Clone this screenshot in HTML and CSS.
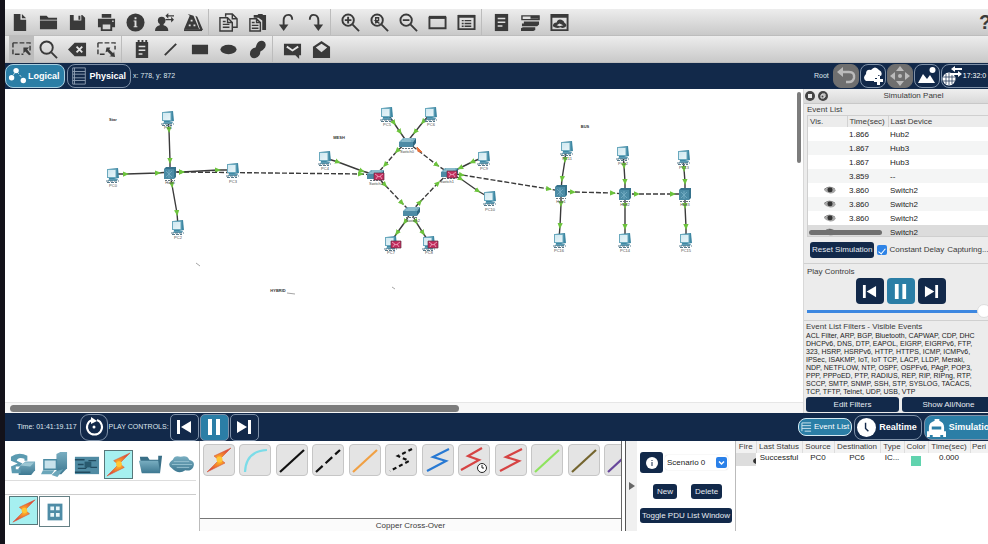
FILE: index.html
```html
<!DOCTYPE html>
<html lang="en">
<head>
<meta charset="utf-8">
<title>Network Simulator</title>
<link rel="stylesheet" href="styles.css">
</head>
<body>
<svg class="defs" aria-hidden="true">
  <defs>
    <linearGradient id="screen" x1="0" y1="0" x2="1" y2="1"><stop offset="0" stop-color="#cfe8f1"/><stop offset="1" stop-color="#e9f5f8"/></linearGradient>
    <linearGradient id="teal" x1="0" y1="0" x2="0" y2="1"><stop offset="0" stop-color="#79aec1"/><stop offset="1" stop-color="#3d7891"/></linearGradient>
    <radialGradient id="fire"><stop offset="0" stop-color="#ffc928"/><stop offset="0.45" stop-color="#f58a2a"/><stop offset="1" stop-color="#dd4b3a"/></radialGradient>
    <marker id="tip" viewBox="0 0 5 5" refX="2.5" refY="2.5" markerWidth="6" markerHeight="6" markerUnits="userSpaceOnUse" orient="auto"><path d="M0 .3 5 2.5 0 4.7z" fill="#6cc33c"/></marker>
    <symbol id="pc" viewBox="-8 -8 16 16" overflow="visible">
      <path d="M-5-6 5-7 6 3-4 5z" fill="#3f88a3"/><path d="M-6-6H3.500V3H-6z" fill="#6aa9be"/><path d="M-5-5H2.500V2H-5z" fill="url(#screen)"/>
      <path d="M-4 4H5L4 6H-5z" fill="#5b9bb3"/><path d="M-7 6H6M-6 7.500H4" stroke="#56798a" stroke-width="1" stroke-dasharray="3 1"/>
    </symbol>
    <symbol id="hub" viewBox="-8 -8 16 16" overflow="visible">
      <path d="M-6-4-4-6H6V4L4 6H-6z" fill="#36728c"/><path d="M-6-4H4V6H-6z" fill="#4b8ba5"/><path d="M-4-2 2 4M2-2-4 4M-1-3V5" stroke="#78b0c5" stroke-width=".8"/><path d="M-5 7.500H5" stroke="#65747c" stroke-dasharray="2 1"/>
    </symbol>
    <symbol id="switch" viewBox="-8 -8 16 16" overflow="visible">
      <path d="M-8-1-4-5H9L6-1z" fill="#74adc1"/><path d="M-8-1H6V4H-8z" fill="#4d8ba5"/><path d="M6-1 9-5V0L6 4z" fill="#2e6881"/><path d="M-5-2H4M-3-4H6" stroke="#b7d7e1" stroke-width=".7"/><path d="M-5 5.500H6" stroke="#65747c" stroke-dasharray="2 1"/>
    </symbol>
    <symbol id="packet" viewBox="-5 -4 10 8" overflow="visible">
      <path d="M-5-3H5V4H-5z" fill="#c22c5d" stroke="#623246" stroke-width=".7"/><path d="M-4-2 0 1 4-2M-3 3-1 0M3 3 1 0" fill="none" stroke="#f1afc5" stroke-width=".8"/>
    </symbol>
    <symbol id="bolt" viewBox="0 0 28 28"><path d="M26 2 9 10l5 4L2 26l18-9-5-4z" fill="url(#fire)" stroke="#d6583d" stroke-width=".6"/><circle cx="14.500" cy="13.500" r="3" fill="#ffc736"/></symbol>
    <symbol id="back" viewBox="0 0 16 16"><path d="M1 1h3v14H1zM15 2v12L5 8z" fill="#fff"/></symbol>
    <symbol id="pause" viewBox="0 0 16 16"><path d="M2 0h4v16H2zM10 0h4v16h-4z" fill="#fff"/></symbol>
    <symbol id="forward" viewBox="0 0 16 16"><path d="M12 1h3v14h-3zM1 2v12l10-6z" fill="#fff"/></symbol>
    <symbol id="eye" viewBox="0 0 12 8"><path d="M0 4Q5-1 12 4 10 8 6 7.500 2 7 0 4z" fill="#a6a6a6"/><circle cx="6" cy="3.800" r="2.500" fill="#333"/><path d="M0 3.500Q5-1 11 3" fill="none" stroke="#666" stroke-width=".8"/></symbol>
  </defs>
</svg>
<div class="app">
  <div class="toolbar" role="toolbar" aria-label="File and view">
    <button aria-label="New"><svg viewBox="0 0 20 20"><path d="M4 1h7v6h6v12H4zM12.500 1 17 5.500h-4.500z"/></svg></button>
    <button aria-label="Open"><svg viewBox="0 0 20 20"><path d="M1 3h7l2 2h9v2H1zM1 8h18v9H1z"/></svg></button>
    <button aria-label="Save"><svg viewBox="0 0 20 20"><path fill-rule="evenodd" d="M2 2h13l3 3v13H2zM6 2v6h8V2zM11 3h2v4h-2z"/></svg></button>
    <button aria-label="Print"><svg viewBox="0 0 20 20"><path fill-rule="evenodd" d="M5 1h10v4H5zM1 6h18v9h-3v4H4v-4H1zM6 12v5h8v-5zM16 8v1.500h1.500V8z"/></svg></button>
    <button aria-label="Network information"><svg viewBox="0 0 20 20"><circle cx="10" cy="10" r="9.500"/><path class="light" d="M9 4.500h2v2H9zM8 8h3v6h1v1H8v-1h1V9H8z"/></svg></button>
    <button aria-label="User profile"><svg viewBox="0 0 20 20"><circle cx="7" cy="8" r="4"/><path d="M0 19q0-5 5-6v-3h4v3q5 1 5 6z"/><path class="thin" d="M13 3h7M11 7h7"/><path d="M14 0v6l-3-3zM17 4v6l3-3z"/></svg></button>
    <button aria-label="Activity wizard"><svg viewBox="0 0 20 20"><path d="M0 17 6 3 4 1l6 2 6 14zM12 3l2 1 6 14h-3z"/><path class="light" d="M7 7h2v2H7zM5 12h2v2H5zM10 12h2v2h-2z"/><path d="M0 17h19v2H0z"/></svg></button>
    <i class="sep"></i>
    <button aria-label="Copy"><svg viewBox="0 0 20 20"><path class="thin" d="M7 4V1h7l5 5v9h-5M14 1v5h5M1 5h8l5 5v9H1zM9 5v5h5M4 9h3M4 12h7M4 15h7"/></svg></button>
    <button aria-label="Paste"><svg viewBox="0 0 20 20"><path d="M6 2h4l1-1h4l1 1h3v16h-4V8l-4-3H6z"/><path class="thin" d="M2 6h7l4 4v9H2zM9 6v4h4M4 10h3M4 13h7M4 16h7"/></svg></button>
    <button aria-label="Undo"><svg viewBox="0 0 20 20"><path class="line" d="M7 14V8q0-6 5-6 4 0 4 5"/><path d="M2 12h10l-5 7z"/></svg></button>
    <button aria-label="Redo"><svg viewBox="0 0 20 20"><path class="line" d="M13 14V8q0-6-5-6-4 0-4 5"/><path d="M8 12h10l-5 7z"/></svg></button>
    <i class="sep"></i>
    <button aria-label="Zoom in"><svg viewBox="0 0 20 20"><circle class="line" cx="7.500" cy="7.500" r="6"/><path class="line" d="m12 12 7 7M4 7.500h7M7.500 4v7"/></svg></button>
    <button aria-label="Reset zoom"><svg viewBox="0 0 20 20"><circle class="line" cx="7.500" cy="7.500" r="6"/><path class="line" d="m12 12 7 7"/><path class="thin" d="M6 11V5h3v3H6l4 3"/></svg></button>
    <button aria-label="Zoom out"><svg viewBox="0 0 20 20"><circle class="line" cx="7.500" cy="7.500" r="6"/><path class="line" d="m12 12 7 7M4 7.500h7"/></svg></button>
    <button aria-label="Drawing palette"><svg viewBox="0 0 20 20"><path class="line" d="M1.500 5h17v11h-17z"/><path d="M1 3h18v3H1z"/></svg></button>
    <button aria-label="Custom devices"><svg viewBox="0 0 20 20"><path class="line" d="M1.500 3h17v14h-17z"/><path class="thin" d="M5 8h2M8 8h7M5 11h2M8 11h7M5 14h2M8 14h7"/><path d="M1 2h18v3H1z"/></svg></button>
    <i class="sep"></i>
    <button aria-label="Notes"><svg viewBox="0 0 20 20"><path d="M3 1h14v18H3z"/><path class="light" d="M6 5h8v1.500H6zM6 9h8v1.500H6zM6 13h5v1.500H6z"/></svg></button>
    <button aria-label="Command log"><svg viewBox="0 0 20 20"><path class="thin" d="M1 3h18v4H1z"/><path d="M10 3h9v3h-9zM3 9h16v3l-2 2H1v-3h2zM2 15h13v3l-2 1H0v-3z"/></svg></button>
    <button aria-label="Background"><svg viewBox="0 0 20 20"><path class="line" d="M1.500 2h17v16h-17z"/><path d="M1 1h18v4H1zM3 14q0-4 4-4 1-4 5-3 3 1 3 3 3 2 2 4-3 3-6 1-4 2-8-1z"/><path class="light" d="m7 13 3-2 4 2-4 1z"/></svg></button>
    <button class="help" aria-label="Help">?</button>
  </div>
  <div class="toolbar" role="toolbar" aria-label="Edit and draw">
    <button class="pressed" aria-label="Select"><svg viewBox="0 0 20 20"><path class="thin" stroke-dasharray="5 2" d="M1 3h18v9M1 3v12h11"/><path d="M12 8h6l-2 2 4 5-2 1-4-4-2 2z"/></svg></button>
    <button aria-label="Inspect"><svg viewBox="0 0 20 20"><circle class="line" cx="8" cy="8" r="6.500"/><path class="line" d="m13 13 6 6"/></svg></button>
    <button aria-label="Delete item"><svg viewBox="0 0 20 20"><path d="M7 3h12v14H7l-7-7z"/><path class="cut" d="m9 7 6 6M15 7l-6 6"/></svg></button>
    <button aria-label="Resize shape"><svg viewBox="0 0 20 20"><path class="thin" stroke-dasharray="5 2" d="M1 3h18v7M1 3v12h9"/><path d="M10 8h4l-1 2 4 4 1-2 1 6-6-1 2-1-4-4-2 1z"/></svg></button>
    <i class="sep"></i>
    <button aria-label="Place note"><svg viewBox="0 0 20 20"><path d="M4 2h13v17H4zM6 0h2v3H6zM10 0h2v3h-2zM14 0h2v3h-2z"/><path class="light" d="M7 6h7v1.500H7zM7 10h7v1.500H7zM7 14h4v1.500H7z"/></svg></button>
    <button aria-label="Draw line"><svg viewBox="0 0 20 20"><path class="line" d="M4 16 16 4"/></svg></button>
    <button aria-label="Draw rectangle"><svg viewBox="0 0 20 20"><path d="M2 5h17v10H2z"/></svg></button>
    <button aria-label="Draw ellipse"><svg viewBox="0 0 20 20"><ellipse cx="10" cy="10" rx="8.500" ry="5"/></svg></button>
    <button aria-label="Draw freeform"><svg viewBox="0 0 20 20"><path d="M9 5q2-5 7-4 4 2 2 7-2 3-5 4 0 5-5 7-5 1-6-4 0-6 6-7z"/></svg></button>
    <i class="sep"></i>
    <button aria-label="Add simple PDU"><svg viewBox="0 0 20 20"><path d="M1 4h18v12h-2v4l-4-4H1z"/><path class="cut" d="m4 7 6 4 6-4"/></svg></button>
    <button aria-label="Add complex PDU"><svg viewBox="0 0 20 20"><path fill-rule="evenodd" d="M1 7 10 1l9 6v12H1zM4 8l6 5 6-5-6-4z"/></svg></button>
  </div>

  <nav class="bar workspace">
    <button class="mode active"><svg viewBox="0 0 20 20"><path d="m4 12 5-8 9 11" stroke="#fff" stroke-dasharray="2 2" fill="none"/><circle cx="9" cy="4" r="3"/><circle cx="4" cy="12" r="3"/><circle cx="17" cy="15" r="3"/></svg>Logical</button>
    <button class="mode"><svg viewBox="0 0 20 20"><path class="rack" d="M3 1h14v18H3zM3 5h14M3 8h14M3 12h14M3 15h14M5 1v18"/></svg>Physical</button>
    <span class="tiny">x: 778, y: 872</span>
    <div class="nav-right">
      <span class="tiny">Root</span>
      <button class="square off" aria-label="Back"><svg viewBox="0 0 20 20"><path d="M1 6 7 1v10z"/><path d="M6 6h7q6 0 5 6-1 4-5 4h-3" fill="none" stroke="#bbb" stroke-width="2.500"/></svg></button>
      <button class="square" aria-label="New cluster"><svg viewBox="0 0 20 20"><path d="M3 15q-4-3 0-7 0-5 5-4 4-5 8 0 4 2 2 6l-3-1v3h-3v3z"/><path d="M14 10h3v3h3v3h-3v3h-3v-3h-3v-3h3z"/></svg></button>
      <button class="square off" aria-label="Move object"><svg viewBox="0 0 20 20"><path d="m10 0 4 5H6zM10 20l4-5H6zM0 10l5-4v8zM20 10l-5-4v8z"/><circle cx="10" cy="10" r="2"/></svg></button>
      <button class="square" aria-label="Set background"><svg viewBox="0 0 20 20"><path d="m1 17 5-9 4 5 3-4 5 8z"/><circle cx="15.500" cy="4" r="3"/></svg></button>
      <button class="square clock"><svg viewBox="0 0 20 20"><circle cx="7" cy="13" r="6.500"/><path d="M1 11h12M1 15h12M7 7v12M4 8v10M10 8v10" stroke="#12294a" stroke-width=".7"/><path d="M9 3l4-3v2h7v2h-7v2zM20 8l-4-3v2h-7v2h7v2z"/></svg>17:32:0</button>
    </div>
  </nav>

  <main class="main">
    <section class="canvas" aria-label="Workspace">
      <svg class="network">
        <g transform="translate(-5 -89)">
          <g class="links">
            <path d="M168 118 169 130 170 161 170 172M113 174 126 174 158 173 170 172M170 172 182 172 218 170 232 170M170 172 172 185 177 213 178 226M325 158 338 162 362 171 376 175M387 113 394 123 400 132 407 142M431 113 423 122 415 132 407 142M484 157 472 162 460 168 449 173M449 173 461 179 478 191 490 198M411 212 405 222 397 233 391 242M411 212 416 222 423 233 429 242M566 147 565 160 562 179 561 191M561 191 561 204 560 226 559 239M623 153 624 166 625 182 625 194M625 194 625 206 625 227 625 239M683 155 684 169 685 182 685 194M685 194 685 206 686 227 686 239"/>
            <path class="cross" d="M170 172 182 172 361 174 376 175M407 142 397 151 385 165 376 175M376 175 385 185 402 203 411 212M411 212 420 202 438 183 449 173M449 173 462 175 549 189 561 191M561 191 573 192 613 193 625 194M625 194 637 194 673 194 685 194"/>
            <path class="cross" d="M407 142 437 165 449 173"/>
          </g>
          <path d="m417 147 5 5-4-.5z" fill="#e8713c" stroke="#e8713c"/>
          <g>
            <use href="#pc" x="160" y="110" width="16" height="16"/><use href="#pc" x="105" y="167" width="16" height="16"/><use href="#pc" x="225" y="162" width="16" height="16"/><use href="#pc" x="170" y="219" width="16" height="16"/>
            <use href="#pc" x="379" y="106" width="16" height="16"/><use href="#pc" x="423" y="106" width="16" height="16"/><use href="#pc" x="317" y="150" width="16" height="16"/><use href="#pc" x="476" y="150" width="16" height="16"/><use href="#pc" x="482" y="190" width="16" height="16"/><use href="#pc" x="383" y="235" width="16" height="16"/><use href="#pc" x="421" y="235" width="16" height="16"/>
            <use href="#pc" x="559" y="140" width="16" height="16"/><use href="#pc" x="615" y="145" width="16" height="16"/><use href="#pc" x="676" y="149" width="16" height="16"/><use href="#pc" x="552" y="232" width="16" height="16"/><use href="#pc" x="617" y="232" width="16" height="16"/><use href="#pc" x="678" y="232" width="16" height="16"/>
            <use href="#hub" x="162" y="165" width="16" height="16"/><use href="#hub" x="553" y="183" width="16" height="16"/><use href="#hub" x="617" y="186" width="16" height="16"/><use href="#hub" x="677" y="186" width="16" height="16"/>
            <use href="#switch" x="399" y="135" width="16" height="16"/><use href="#switch" x="367" y="167" width="16" height="16"/><use href="#switch" x="441" y="165" width="16" height="16"/><use href="#switch" x="403" y="204" width="16" height="16"/>
            <use href="#packet" x="374" y="172" width="10" height="8"/><use href="#packet" x="447" y="170" width="10" height="8"/><use href="#packet" x="391" y="240" width="10" height="8"/><use href="#packet" x="428" y="240" width="10" height="8"/>
          </g>
          <g class="labels">
            <text x="168" y="129">PC1</text><text x="113" y="187">PC0</text><text x="233" y="183">PC3</text><text x="178" y="239">PC2</text><text x="170" y="184">Hub0</text>
            <text x="387" y="126">PC5</text><text x="431" y="126">PC6</text><text x="325" y="170">PC4</text><text x="484" y="170">PC9</text><text x="490" y="211">PC10</text><text x="391" y="254">PC7</text><text x="429" y="254">PC8</text>
            <text x="407" y="153">Switch0</text><text x="376" y="185">Switch3</text><text x="447" y="183">Switch1</text><text x="413" y="222">Switch2</text>
            <text x="567" y="160">PC11</text><text x="623" y="165">PC12</text><text x="684" y="169">PC13</text><text x="559" y="252">PC16</text><text x="625" y="252">PC14</text><text x="686" y="252">PC15</text>
            <text x="561" y="203">Hub1</text><text x="625" y="206">Hub2</text><text x="685" y="206">Hub3</text>
            <text class="note" x="113" y="121">Star</text><text class="note" x="339" y="139">MESH</text><text class="note" x="585" y="128">BUS</text><text class="note" x="278" y="292">HYBRID</text>
          </g>
          <path d="m287 293 8 1M196 263l4 3M392 287l3 2" stroke="#a5a5a5" fill="none"/>
        </g>
      </svg>
      <span class="vthumb"></span>
      <div class="htrack"><span class="hthumb"></span></div>
    </section>

    <aside class="panel">
      <div class="panel-inner">
        <header class="titlebar">
          <button aria-label="Close"><svg viewBox="0 0 10 10"><circle cx="5" cy="5" r="5" fill="#444"/><path d="M3 3h4v4H3z" fill="#e9e9e9"/></svg></button>
          <button aria-label="Detach"><svg viewBox="0 0 10 10"><circle cx="5" cy="5" r="5" fill="#444"/><path d="M3 4h3v3H3zM4 4V3h3v3H6" fill="none" stroke="#e9e9e9"/></svg></button>
          <h2>Simulation Panel</h2>
        </header>
        <section class="events">
          <h3>Event List</h3>
          <div class="event-scroll">
            <table>
              <thead><tr><th class="col-vis">Vis.</th><th class="col-time">Time(sec)</th><th>Last Device</th></tr></thead>
              <tbody>
                <tr><td></td><td>1.866</td><td>Hub2</td></tr>
                <tr><td></td><td>1.867</td><td>Hub3</td></tr>
                <tr><td></td><td>1.867</td><td>Hub3</td></tr>
                <tr><td></td><td>3.859</td><td>--</td></tr>
                <tr><td><svg class="eye"><use href="#eye"/></svg></td><td>3.860</td><td>Switch2</td></tr>
                <tr><td><svg class="eye"><use href="#eye"/></svg></td><td>3.860</td><td>Switch2</td></tr>
                <tr><td><svg class="eye"><use href="#eye"/></svg></td><td>3.860</td><td>Switch2</td></tr>
                <tr class="current"><td><svg class="eye"><use href="#eye"/></svg></td><td>3.860</td><td>Switch2</td></tr>
              </tbody>
            </table>
            <span class="ethumb"></span>
          </div>
          <div class="reset-row">
            <button class="navy">Reset Simulation</button>
            <label><input type="checkbox" checked>Constant Delay</label>
            <span>Capturing...</span>
          </div>
        </section>
        <section class="play">
          <h3>Play Controls</h3>
          <div class="play-buttons">
            <button aria-label="Step back"><svg><use href="#back"/></svg></button>
            <button class="active" aria-label="Pause"><svg><use href="#pause"/></svg></button>
            <button aria-label="Step forward"><svg><use href="#forward"/></svg></button>
          </div>
          <input type="range" min="0" max="100" value="100" aria-label="Play speed">
        </section>
        <section class="filters">
          <h3>Event List Filters - Visible Events</h3>
          <p>ACL Filter, ARP, BGP, Bluetooth, CAPWAP, CDP, DHC<br>DHCPv6, DNS, DTP, EAPOL, EIGRP, EIGRPv6, FTP,<br>323, HSRP, HSRPv6, HTTP, HTTPS, ICMP, ICMPv6,<br>IPSec, ISAKMP, IoT, IoT TCP, LACP, LLDP, Meraki,<br>NDP, NETFLOW, NTP, OSPF, OSPFv6, PAgP, POP3,<br>PPP, PPPoED, PTP, RADIUS, REP, RIP, RIPng, RTP,<br>SCCP, SMTP, SNMP, SSH, STP, SYSLOG, TACACS,<br>TCP, TFTP, Telnet, UDP, USB, VTP</p>
          <div class="filter-buttons"><button class="navy">Edit Filters</button><button class="navy">Show All/None</button></div>
        </section>
      </div>
    </aside>
  </main>

  <div class="bar timebar">
    <span class="tiny">Time: 01:41:19.117</span>
    <button class="ctl round" aria-label="Power cycle devices"><svg viewBox="0 0 20 20"><path d="M8 3a7.500 7.500 0 1 0 5 0" fill="none" stroke="#fff" stroke-width="2"/><path d="m7 0 6 4-6 3z"/><circle cx="10" cy="10" r="1.500"/></svg></button>
    <span class="tiny">PLAY CONTROLS:</span>
    <button class="ctl" aria-label="Back"><svg><use href="#back"/></svg></button>
    <button class="ctl active" aria-label="Pause"><svg><use href="#pause"/></svg></button>
    <button class="ctl" aria-label="Forward"><svg><use href="#forward"/></svg></button>
    <div class="views">
      <button class="view list"><svg viewBox="0 0 12 12"><path d="M1 1h10M1 4h10M1 7h10M4 10h7M1 1v9" fill="none" stroke="#d5e9f2"/></svg>Event List</button>
      <button class="view"><svg viewBox="0 0 20 20"><circle cx="10" cy="10" r="10"/><path d="M9 5v6l3 3" fill="none" stroke="#12294a" stroke-width="1.500"/></svg>Realtime</button>
      <button class="view active"><svg viewBox="0 0 20 20"><path fill-rule="evenodd" d="M8 1h5v2q5 2 5 7v4h2v6h-3v-2h-3v2H6v-2H3v2H0v-6h2v-4q0-5 6-7zM5 9v3h10V9z"/></svg>Simulatio</button>
    </div>
  </div>

  <div class="bottom">
    <section class="devices" aria-label="Device types">
      <div class="types">
        <button aria-label="Network devices"><svg viewBox="0 0 28 28"><path d="m11 15 5-4h10v9l-4 5H9v-7z" fill="url(#teal)"/><path d="M1 6q8-6 17-1v5h-3V8q-7-2-8 2l6 3-3 3H6v3h5v4H2l-1-7 7-3-7-3z" fill="#5c9bb1"/><path d="m11 15 4-3h10l-4 4z" fill="#9bc6d3"/></svg></button>
        <button aria-label="End devices"><svg viewBox="0 0 28 28"><path d="m16 3 4-2h7v17l-6 6h-5z" fill="url(#teal)"/><path d="M3 9h13v10H3z" fill="#c8e2eb" stroke="#4c8ba3" stroke-width="1.500"/><path d="m2 20h12l-3 4H0zM15 21l8-2-6 8-6-2z" fill="#6ba6ba"/></svg></button>
        <button aria-label="Components"><svg viewBox="0 0 28 28"><path d="M2 6h25v18H2z" fill="#508ba3"/><path d="M2 9h10M5 14h6M5 18h8l3-4M16 10h8M18 17h7M2 22h16" fill="none" stroke="#214b5f" stroke-width="1.500"/><path d="M12 11h7v6h-7z" fill="#285a6f"/></svg></button>
        <button class="chosen" aria-label="Connections"><svg><use href="#bolt"/></svg></button>
        <button aria-label="Miscellaneous"><svg viewBox="0 0 28 28"><path d="M3 6h8l2 3h9V5h4l-2 17H5z" fill="#396f87"/><path d="M2 10h20l2 13H5z" fill="url(#teal)"/></svg></button>
        <button aria-label="Multiuser"><svg viewBox="0 0 28 28"><path d="M4 18q-6-4 1-9 2-5 8-3 7-2 9 3 7 2 4 8-2 4-8 3-7 5-14-2z" fill="url(#teal)"/><path d="M6 11h16M4 14h21M9 17h13" stroke="#94bfce"/></svg></button>
      </div>
      <div class="subtypes">
        <button class="chosen" aria-label="Connections"><svg><use href="#bolt"/></svg></button>
        <button class="boxed" aria-label="Structured cabling"><svg viewBox="0 0 28 28"><path d="M6 5h16v18H6z" fill="#4e8ca6"/><path d="M9 8h4v4H9zM15 8h4v4h-4zM9 15h4v4H9zM15 15h4v4h-4z" fill="#eaf6f9"/></svg></button>
      </div>
    </section>
    <section class="cables" aria-label="Connections">
      <div class="cable-clip"><div class="cable-list">
        <button aria-label="Automatic"><svg><use href="#bolt"/></svg></button>
        <button aria-label="Console"><svg viewBox="0 0 28 28"><path stroke="#7bdce8" d="M4 26Q5 5 26 4"/></svg></button>
        <button aria-label="Copper straight-through"><svg viewBox="0 0 28 28"><path stroke="#111" d="M2 26 26 4"/></svg></button>
        <button aria-label="Copper cross-over"><svg viewBox="0 0 28 28"><path stroke="#111" stroke-dasharray="9 4" d="M2 26 26 4"/></svg></button>
        <button aria-label="Fiber"><svg viewBox="0 0 28 28"><path stroke="#f0a044" d="M2 26 26 4"/></svg></button>
        <button aria-label="Phone"><svg viewBox="0 0 28 28"><path stroke="#111" stroke-dasharray="4 3" d="M25 3 11 10l11 5L3 25"/></svg></button>
        <button aria-label="Coaxial"><svg viewBox="0 0 28 28"><path stroke="#2879d3" d="M25 3 9 11l13 4L3 25"/></svg></button>
        <button aria-label="Serial DCE"><svg viewBox="0 0 28 28"><path stroke="#d64343" d="M22 2 8 10l11 4L1 24"/><circle cx="22" cy="22" r="4.500" fill="#fff" stroke="#222" stroke-width="1"/><path d="M22 19v3h2" stroke="#222" stroke-width="1"/></svg></button>
        <button aria-label="Serial DTE"><svg viewBox="0 0 28 28"><path stroke="#d64343" d="M25 3 9 11l13 4L3 25"/></svg></button>
        <button aria-label="Octal"><svg viewBox="0 0 28 28"><path stroke="#8ee35e" d="M2 26 26 4"/></svg></button>
        <button aria-label="IoT custom cable"><svg viewBox="0 0 28 28"><path stroke="#74652f" d="M2 26 26 4"/></svg></button>
        <button aria-label="USB"><svg viewBox="0 0 28 28"><path stroke="#67479b" d="M2 26 26 4"/></svg></button>
      </div></div>
      <div class="cable-name">Copper Cross-Over</div>
    </section>
    <button class="splitter" aria-label="Collapse"><svg viewBox="0 0 6 8"><path d="M0 0 6 4 0 8z" fill="#666"/></svg></button>
    <section class="scenario">
      <div class="pick">
        <button class="navy info" aria-label="Scenario description"><svg viewBox="0 0 12 12"><circle cx="6" cy="6" r="6" fill="#fff"/><path d="M5.500 3h1v1h-1zM5.500 5h1v4h-1z" fill="#12294a"/></svg></button>
        <span class="select"><select aria-label="Scenario"><option>Scenario 0</option></select><svg viewBox="0 0 11 11"><rect width="11" height="11" rx="2" fill="#2a80e8"/><path d="m3 4.500 2.500 2.500L8 4.500" fill="none" stroke="#fff" stroke-width="1.500"/></svg></span>
      </div>
      <div class="pair"><button class="navy">New</button><button class="navy">Delete</button></div>
      <button class="navy toggle">Toggle PDU List Window</button>
    </section>
    <section class="pdus">
      <table>
        <thead><tr><th class="c1">Fire</th><th class="c2">Last Status</th><th class="c3">Source</th><th class="c4">Destination</th><th class="c5">Type</th><th class="c6">Color</th><th class="c7">Time(sec)</th><th class="c8">Peri</th></tr></thead>
        <tbody><tr><td class="fire"><svg viewBox="0 0 3 6"><path d="M3 0v6Q0 5 0 3t3-3z" fill="#333"/></svg></td><td>Successful</td><td>PC0</td><td>PC6</td><td>IC...</td><td><span class="swatch"></span></td><td>0.000</td><td></td></tr></tbody>
      </table>
    </section>
  </div>
</div>
</body>
</html>
```
FILE: styles.css
```css
:root {
  --navy: #12294a;
  --blue: #2b7ea6;
  --ink: #3a3a3a;
  --panel: #ececec;
}

* { box-sizing: border-box; }

body {
  margin: 0;
  font: 8px/10px "Liberation Sans", Arial, sans-serif;
  color: var(--ink);
  background: #fff;
}

button {
  margin: 0;
  padding: 0;
  border: 0;
  background: none;
  font: inherit;
  color: inherit;
  white-space: nowrap;
}

h2, h3, p { margin: 0; font-size: 8px; font-weight: 400; }
svg { display: block; flex: none; }
table { border-collapse: collapse; table-layout: fixed; }
th, td { padding: 0; font-weight: 400; white-space: nowrap; }
.defs { position: absolute; width: 0; height: 0; }

.app {
  display: flex;
  flex-direction: column;
  height: 100vh;
  min-height: 480px;
  padding: 9px 0 13px;
  border-left: 5px solid #13121a;
  overflow: hidden;
}

/* Icon toolbars */
.toolbar {
  flex: none;
  display: flex;
  align-items: center;
  height: 27px;
  background: linear-gradient(#ededed, #c9c9c9);
  border-bottom: 1px solid #bdbdbd;
  overflow: hidden;
}
.toolbar button { flex: none; display: grid; place-items: center; width: 29px; height: 26px; }
.toolbar svg { width: 19px; height: 19px; fill: var(--ink); }
.toolbar .line { fill: none; stroke: var(--ink); stroke-width: 2; }
.toolbar .thin { fill: none; stroke: var(--ink); stroke-width: 1.5; }
.toolbar .light { fill: #ddd; }
.toolbar .cut { fill: none; stroke: #e5e5e5; stroke-width: 2; }
.toolbar .pressed { background: #bdbdbd; background-clip: content-box; padding: 0 0 0 4px; }
.toolbar .help { width: 12px; margin-left: auto; margin-right: -3px; font-size: 20px; font-weight: 700; }
.sep { flex: none; width: 6px; height: 26px; border-left: 1px solid #bcbcbc; }

/* Navy bars */
.bar { flex: none; display: flex; align-items: center; background: var(--navy); color: #fff; overflow: hidden; }
.bar svg { fill: #fff; }
.tiny { font-size: 7px; white-space: nowrap; color: #dfe6ee; }

.workspace { height: 26px; gap: 2px; }
.mode {
  display: flex;
  align-items: center;
  gap: 2px;
  height: 24px;
  padding: 0 4px 0 2px;
  border: 1px solid #7f91a8;
  border-radius: 8px;
  font-size: 9px;
  font-weight: 700;
}
.mode svg { width: 18px; height: 18px; }
.mode .rack { fill: none; stroke: #91a0b4; }
.mode.active { background: var(--blue); border-color: #a9cfe0; }
.nav-right { flex: none; display: flex; align-items: center; gap: 1px; width: 174px; margin-left: auto; }
.nav-right .tiny { margin-right: 3px; }
.square {
  flex: none;
  display: grid;
  place-items: center;
  width: 26px;
  height: 24px;
  border: 1px solid #7f91a8;
  border-radius: 8px;
}
.square svg { width: 20px; height: 20px; }
.square.off { background: #6f6f6f; border-color: #6f6f6f; }
.square.off svg { fill: #bbb; }
.square.clock { display: flex; gap: 1px; width: 60px; font-size: 7px; }

/* Main area */
.main { flex: 1; display: flex; min-height: 0; }
.canvas { position: relative; flex: 1; display: flex; flex-direction: column; min-width: 0; background: #fff; }
.network { flex: 1; width: 100%; min-height: 0; }
.links path { fill: none; stroke: #3b3b3b; stroke-width: 1.4; marker-mid: url(#tip); }
.links .cross { stroke-dasharray: 5 2; }
.labels { font-size: 4px; text-anchor: middle; fill: #4c4c4c; }
.labels .note { font-size: 4px; font-weight: 700; fill: #333; }
.vthumb { position: absolute; top: 3px; right: 2px; width: 4px; height: 71px; border-radius: 2px; background: #7c7c7c; }
.htrack { flex: none; height: 11px; padding: 2px 5px; background: #f7f7f7; border-top: 1px solid #e6e6e6; }
.hthumb { display: block; width: 57%; height: 7px; border-radius: 4px; background: #7c7c7c; }

/* Simulation panel */
.panel { flex: none; width: 185px; overflow: hidden; background: var(--panel); border-left: 1px solid #d8d8d8; }
.panel-inner { width: 220px; height: 100%; display: flex; flex-direction: column; }
.panel h3 { line-height: 10px; }
.titlebar { flex: none; display: flex; align-items: center; gap: 3px; height: 15px; padding-left: 1px; background: linear-gradient(#efefef, #d9d9d9); border-bottom: 1px solid #c8c8c8; }
.titlebar svg { width: 10px; height: 10px; }
.titlebar h2 { flex: 1; padding-right: 28px; text-align: center; }
.events { flex: none; padding: 1px 0 0 3px; border-bottom: 1px solid #d0d0d0; }
.event-scroll { position: relative; height: 122px; overflow: hidden; border: 1px solid #cfcfcf; background: #fff; }
.event-scroll table { width: 100%; text-align: left; }
.event-scroll th { height: 11px; padding-left: 2px; background: #ececec; border-right: 1px solid #d2d2d2; line-height: 10px; }
.event-scroll td { height: 14px; padding-left: 2px; line-height: 13px; color: #222; }
.event-scroll tr:nth-child(even) td { background: #f4f5f5; }
.event-scroll tr.current:nth-child(n) td { background: #dcdcdc; }
.col-vis { width: 39px; }
.col-time { width: 41px; }
.eye { width: 12px; height: 8px; margin-left: 14px; }
.ethumb { position: absolute; left: 1px; bottom: 1px; width: 73px; height: 5px; border-radius: 3px; background: #707070; }
.reset-row { display: flex; align-items: center; gap: 3px; height: 26px; padding-left: 3px; }
.reset-row label { display: flex; align-items: center; gap: 2px; white-space: nowrap; }
.reset-row input { appearance: none; width: 10px; height: 10px; margin: 0; border-radius: 2px; background: #2e83e6; display: grid; place-items: center; }
.reset-row input::after { content: ""; width: 3px; height: 6px; border: solid #fff; border-width: 0 1px 1px 0; transform: rotate(40deg); }
.navy { height: 15px; padding: 0 4px; border-radius: 3px; background: var(--navy); color: #e6ebf2; }
.reset-row .navy { height: 16px; padding: 0 2px; }

.play { flex: none; padding: 3px 0 2px 3px; border-bottom: 1px solid #d0d0d0; }
.play-buttons { display: flex; justify-content: center; gap: 3px; padding: 1px 30px 0 0; }
.play-buttons button { display: grid; place-items: center; width: 28px; height: 26px; border-radius: 4px; background: var(--navy); }
.play-buttons .active { background: var(--blue); }
.play-buttons svg { width: 15px; height: 15px; }
.play input { appearance: none; display: block; width: 184px; height: 14px; margin: 0; background: linear-gradient(#3c87e0, #3c87e0) center / 100% 3px no-repeat; }
.play input::-webkit-slider-thumb { appearance: none; width: 14px; height: 14px; border: 1px solid #ddd; border-radius: 50%; background: #fff; }

.filters { flex: 1; padding: 1px 0 0 2px; }
.filters p { font-size: 7px; line-height: 8px; white-space: nowrap; color: #222; }
.filter-buttons { display: grid; grid-template-columns: 93px 93px; gap: 3px; margin-top: 1px; }

/* Time bar */
.timebar { height: 28px; padding-left: 12px; gap: 1px; }
.ctl { flex: none; display: grid; place-items: center; width: 29px; height: 27px; border: 1px solid #7f91a8; border-radius: 5px; }
.ctl.active { background: var(--blue); }
.ctl svg { width: 16px; height: 16px; }
.ctl.round { width: 28px; margin-left: 2px; border-radius: 9px; }
.ctl.round svg { width: 20px; height: 20px; }
.views { flex: none; display: flex; align-items: center; gap: 2px; width: 190px; margin-left: auto; }
.view { flex: none; display: flex; align-items: center; gap: 3px; height: 25px; padding: 0 4px 0 2px; border: 1px solid #7f91a8; border-radius: 8px; font-size: 9px; font-weight: 700; }
.view svg { width: 19px; height: 19px; }
.view.active { background: var(--blue); padding-right: 12px; }
.view.list { gap: 2px; height: 18px; padding: 0 2px; border-color: #d5e9f2; background: var(--blue); font-size: 8px; font-weight: 400; }
.view.list svg { width: 11px; height: 11px; }

/* Bottom area */
.bottom { flex: none; display: flex; height: 90px; overflow: hidden; }
.devices { flex: none; width: 195px; border-right: 1px solid #bbb; }
.types { display: flex; gap: 3px; height: 40px; padding: 9px 0 0 4px; margin: 0 3px 0 0; border-bottom: 1px solid #ddd; }
.types button, .subtypes button { width: 29px; height: 29px; display: grid; place-items: center; }
.types svg { width: 27px; height: 27px; }
.types .chosen, .subtypes .chosen { border: 1px solid #57777a; background: #a6f0f0; }
.subtypes { display: flex; gap: 1px; margin: 13px 3px 0 0; padding: 1px 0 0 4px; border-top: 1px solid #ccc; }
.subtypes svg { width: 26px; height: 26px; }
.subtypes .boxed { width: 31px; height: 31px; border: 1px solid #658085; }
.cables { flex: 1; min-width: 0; display: flex; flex-direction: column; border-right: 1px solid #666; }
.cable-clip { flex: 1; overflow: hidden; padding: 3px 0 0 3px; }
.cable-list { display: flex; justify-content: space-between; margin-right: -15px; }
.cable-list button { flex: none; display: grid; place-items: center; width: 32px; height: 32px; border: 1px solid #c6c6c6; border-radius: 4px; background: #e4e4e4; }
.cable-list svg { width: 28px; height: 28px; fill: none; stroke-width: 2.2; }
.cable-name { height: 13px; border-top: 1px solid #777; text-align: center; line-height: 13px; background: #fbfbfb; }
.splitter { flex: none; display: grid; place-items: center; width: 12px; margin-left: 3px; border-left: 1px solid #555; background: #f0f0f0; }
.splitter svg { width: 6px; height: 8px; }
.scenario { flex: none; display: flex; flex-direction: column; align-items: flex-start; width: 99px; padding: 11px 0 0 3px; border-right: 1px solid #bbb; }
.pick { display: flex; align-items: center; gap: 2px; }
.navy.info { display: grid; place-items: center; width: 23px; height: 21px; }
.info svg { width: 12px; height: 12px; }
.select { position: relative; width: 63px; height: 15px; }
.select select { appearance: none; width: 100%; height: 100%; padding: 0 14px 0 2px; border: 0; border-radius: 3px; background: #fff; box-shadow: 0 0 1px #bbb; font: inherit; color: #222; }
.select svg { position: absolute; top: 2px; right: 1px; width: 11px; height: 11px; pointer-events: none; }
.pair { display: flex; gap: 14px; margin: 11px 0 9px 13px; }
.toggle { padding: 0 2px; }
.pdus { flex: none; width: 252px; overflow: hidden; }
.pdus table { width: 252px; text-align: center; }
.pdus th { height: 12px; line-height: 12px; border-right: 1px solid #ddd; background: #f2f2f2; }
.pdus td { height: 13px; line-height: 10px; vertical-align: top; color: #222; }
.c1 { width: 20px; }
.c2 { width: 46px; }
.c3 { width: 32px; }
.c4 { width: 46px; }
.c5 { width: 24px; }
.c6 { width: 24px; }
.c7 { width: 42px; }
.c8 { width: 18px; }
.pdus .fire { background: #ddd; }
.fire svg { width: 3px; height: 6px; margin: 5px 0 0 auto; }
.swatch { display: block; width: 10px; height: 10px; margin: 3px auto 0; background: #60d3ae; }
```
